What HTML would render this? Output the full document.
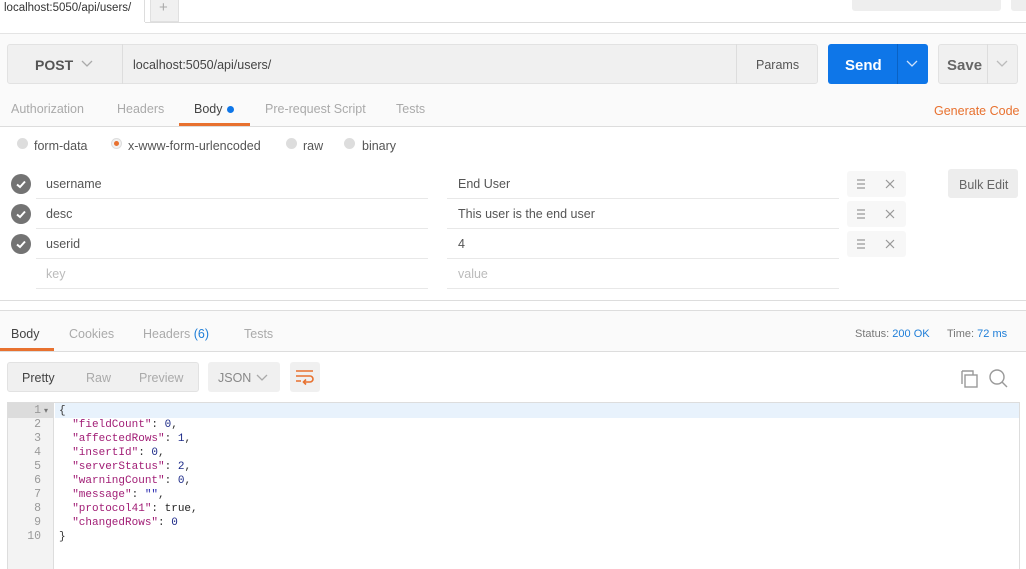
<!DOCTYPE html>
<html><head><meta charset="utf-8"><style>
*{box-sizing:border-box;margin:0;padding:0}
body{width:1026px;height:569px;overflow:hidden;background:#fff;font-family:"Liberation Sans",sans-serif;font-size:12px;color:#505050;position:relative}
.a{position:absolute}
.t{position:absolute;white-space:nowrap;transform:translateY(1px)}
.mono{font-family:"Liberation Mono",monospace;font-size:11px}
</style></head><body>
<!-- top tabs -->
<div class="t" style="left:4px;top:1px;font-size:11.5px;color:#333">localhost:5050/api/users/</div>
<div class="a" style="left:144px;top:0;width:1px;height:22px;background:#ddd"></div>
<div class="a" style="left:150px;top:0;width:29px;height:22px;background:#f0f0f0;border:1px solid #e0e0e0;border-top:0"></div>
<div class="t" style="left:159px;top:-2px;font-size:15px;color:#aaa">+</div>
<div class="a" style="left:145px;top:22px;width:881px;height:1px;background:#ddd"></div>
<div class="a" style="left:852px;top:0;width:149px;height:11px;background:#eee;border-radius:0 0 3px 3px"></div>
<div class="a" style="left:1011px;top:0;width:15px;height:11px;background:#eee;border-radius:0 0 0 3px"></div>
<!-- request region -->
<div class="a" style="left:0;top:33px;width:1026px;height:94px;background:#fafafa;border-top:1px solid #e4e4e4"></div>
<div class="a" style="left:7px;top:44px;width:811px;height:40px;background:#f0f0f0;border:1px solid #e2e2e2;border-radius:3px"></div>
<div class="a" style="left:122px;top:44px;width:1px;height:40px;background:#ddd"></div>
<div class="a" style="left:736px;top:44px;width:1px;height:40px;background:#ddd"></div>
<div class="t" style="left:35px;top:56px;font-size:14px;font-weight:bold;color:#555">POST</div>
<svg class="a" style="left:81px;top:60px" width="12" height="8"><path d="M1 1L6 6L11 1" fill="none" stroke="#aaa" stroke-width="1.3"/></svg>
<div class="t" style="left:133px;top:57px;font-size:12.5px;color:#444">localhost:5050/api/users/</div>
<div class="t" style="left:756px;top:57px;font-size:12.5px;color:#555">Params</div>
<div class="a" style="left:828px;top:44px;width:100px;height:40px;background:#0e76e8;border-radius:3px"></div>
<div class="a" style="left:897px;top:44px;width:1px;height:40px;background:#0a62c4"></div>
<div class="t" style="left:845px;top:56px;font-size:15px;font-weight:bold;color:#fff">Send</div>
<svg class="a" style="left:906px;top:60px" width="12" height="8"><path d="M1 1L6 6L11 1" fill="none" stroke="#cfe2fb" stroke-width="1.3"/></svg>
<div class="a" style="left:938px;top:44px;width:80px;height:40px;background:#f0f0f0;border:1px solid #e2e2e2;border-radius:3px"></div>
<div class="a" style="left:987px;top:44px;width:1px;height:40px;background:#ddd"></div>
<div class="t" style="left:947px;top:56px;font-size:15px;font-weight:bold;color:#666">Save</div>
<svg class="a" style="left:996px;top:60px" width="12" height="8"><path d="M1 1L6 6L11 1" fill="none" stroke="#bbb" stroke-width="1.3"/></svg>
<!-- req tabs -->
<div class="t" style="left:11px;top:101px;font-size:12.5px;color:#aaa">Authorization</div>
<div class="t" style="left:117px;top:101px;font-size:12.5px;color:#aaa">Headers</div>
<div class="t" style="left:194px;top:101px;font-size:12.5px;color:#444">Body</div>
<div class="a" style="left:227px;top:106px;width:7px;height:7px;border-radius:50%;background:#0e76e8"></div>
<div class="t" style="left:265px;top:101px;font-size:12.5px;color:#aaa">Pre-request Script</div>
<div class="t" style="left:396px;top:101px;font-size:12.5px;color:#aaa">Tests</div>
<div class="t" style="left:934px;top:103px;font-size:12.5px;color:#e8712f">Generate Code</div>
<div class="a" style="left:0;top:126px;width:1026px;height:1px;background:#ddd"></div>
<div class="a" style="left:179px;top:123px;width:71px;height:3px;background:#e8712f"></div>
<!-- radios -->
<div class="a" style="left:17px;top:138px;width:11px;height:11px;border-radius:50%;background:#ddd"></div>
<div class="t" style="left:34px;top:138px;font-size:12.5px;color:#555">form-data</div>
<div class="a" style="left:111px;top:138px;width:11px;height:11px;border-radius:50%;background:#f1f1f1;border:1px solid #ddd"></div>
<div class="a" style="left:114px;top:141px;width:5px;height:5px;border-radius:50%;background:#e8712f"></div>
<div class="t" style="left:128px;top:138px;font-size:12.5px;color:#555">x-www-form-urlencoded</div>
<div class="a" style="left:286px;top:138px;width:11px;height:11px;border-radius:50%;background:#ddd"></div>
<div class="t" style="left:303px;top:138px;font-size:12.5px;color:#555">raw</div>
<div class="a" style="left:344px;top:138px;width:11px;height:11px;border-radius:50%;background:#ddd"></div>
<div class="t" style="left:362px;top:138px;font-size:12.5px;color:#555">binary</div>
<!-- rows -->
<div class="a" style="left:11px;top:174px;width:20px;height:20px;border-radius:50%;background:#737373"></div>
<div class="a" style="left:11px;top:204px;width:20px;height:20px;border-radius:50%;background:#737373"></div>
<div class="a" style="left:11px;top:234px;width:20px;height:20px;border-radius:50%;background:#737373"></div>
<svg class="a" style="left:11px;top:174px" width="20" height="80"><g fill="none" stroke="#fff" stroke-width="2"><path d="M6 10.5L9 13L14 7.5"/><path d="M6 40.5L9 43L14 37.5"/><path d="M6 70.5L9 73L14 67.5"/></g></svg>
<div class="t" style="left:46px;top:176px;font-size:12.5px;color:#555">username</div>
<div class="t" style="left:46px;top:206px;font-size:12.5px;color:#555">desc</div>
<div class="t" style="left:46px;top:236px;font-size:12.5px;color:#555">userid</div>
<div class="t" style="left:46px;top:266px;font-size:12.5px;color:#bbb">key</div>
<div class="t" style="left:458px;top:176px;font-size:12.5px;color:#555">End User</div>
<div class="t" style="left:458px;top:206px;font-size:12.5px;color:#555">This user is the end user</div>
<div class="t" style="left:458px;top:236px;font-size:12.5px;color:#555">4</div>
<div class="t" style="left:458px;top:266px;font-size:12.5px;color:#bbb">value</div>
<div class="a" style="left:36px;top:198px;width:392px;height:1px;background:#e8e8e8"></div>
<div class="a" style="left:36px;top:228px;width:392px;height:1px;background:#e8e8e8"></div>
<div class="a" style="left:36px;top:258px;width:392px;height:1px;background:#e8e8e8"></div>
<div class="a" style="left:36px;top:288px;width:392px;height:1px;background:#e8e8e8"></div>
<div class="a" style="left:447px;top:198px;width:392px;height:1px;background:#e8e8e8"></div>
<div class="a" style="left:447px;top:228px;width:392px;height:1px;background:#e8e8e8"></div>
<div class="a" style="left:447px;top:258px;width:392px;height:1px;background:#e8e8e8"></div>
<div class="a" style="left:447px;top:288px;width:392px;height:1px;background:#e8e8e8"></div>
<div class="a" style="left:847px;top:171px;width:59px;height:26px;background:#f7f7f7;border-radius:3px"></div>
<div class="a" style="left:847px;top:201px;width:59px;height:26px;background:#f7f7f7;border-radius:3px"></div>
<div class="a" style="left:847px;top:231px;width:59px;height:26px;background:#f7f7f7;border-radius:3px"></div>
<svg class="a" style="left:847px;top:171px" width="59" height="86"><g fill="none" stroke="#999" stroke-width="1.2"><path d="M10 9h8M10 13h8M10 17h8M10 39h8M10 43h8M10 47h8M10 69h8M10 73h8M10 77h8"/><path d="M39 9l8 8M47 9l-8 8M39 39l8 8M47 39l-8 8M39 69l8 8M47 69l-8 8"/></g></svg>
<div class="a" style="left:948px;top:169px;width:70px;height:29px;background:#ededed;border-radius:3px"></div>
<div class="t" style="left:959px;top:177px;font-size:12.5px;color:#666">Bulk Edit</div>
<!-- response -->
<div class="a" style="left:0;top:300px;width:1026px;height:1px;background:#ddd"></div>
<div class="a" style="left:0;top:310px;width:1026px;height:42px;background:#fafafa;border-top:1px solid #ddd;border-bottom:1px solid #ddd"></div>
<div class="a" style="left:0;top:348px;width:54px;height:3px;background:#e8712f"></div>
<div class="t" style="left:11px;top:326px;font-size:12.5px;color:#444">Body</div>
<div class="t" style="left:69px;top:326px;font-size:12.5px;color:#aaa">Cookies</div>
<div class="t" style="left:143px;top:326px;font-size:12.5px;color:#aaa">Headers <span style="color:#1f7ed8">(6)</span></div>
<div class="t" style="left:244px;top:326px;font-size:12.5px;color:#aaa">Tests</div>
<div class="t" style="left:855px;top:327px;font-size:11px;color:#777">Status: <span style="color:#1f7ed8">200 OK</span></div>
<div class="t" style="left:947px;top:327px;font-size:11px;color:#777">Time: <span style="color:#1f7ed8">72 ms</span></div>
<div class="a" style="left:7px;top:362px;width:192px;height:30px;background:#f0f0f0;border:1px solid #e2e2e2;border-radius:3px"></div>
<div class="t" style="left:22px;top:370px;font-size:12.5px;color:#444">Pretty</div>
<div class="t" style="left:86px;top:370px;font-size:12.5px;color:#aaa">Raw</div>
<div class="t" style="left:139px;top:370px;font-size:12.5px;color:#aaa">Preview</div>
<div class="a" style="left:208px;top:362px;width:72px;height:30px;background:#f0f0f0;border-radius:3px"></div>
<div class="t" style="left:218px;top:370px;font-size:12.5px;color:#888">JSON</div>
<svg class="a" style="left:256px;top:374px" width="12" height="8"><path d="M1 1L6 6L11 1" fill="none" stroke="#aaa" stroke-width="1.3"/></svg>
<div class="a" style="left:290px;top:362px;width:30px;height:30px;background:#f0f0f0;border-radius:3px"></div>
<svg class="a" style="left:294px;top:368px" width="22" height="18"><g fill="none" stroke="#e8712f" stroke-width="1.6"><path d="M2 3h17M2 8h14a3 3 0 0 1 0 6h-6M2 13h5"/><path d="M12 11.5l-2.5 2.5l2.5 2.5"/></g></svg>
<svg class="a" style="left:960px;top:368px" width="50" height="20"><g fill="none" stroke="#999" stroke-width="1.4"><path d="M2 3h11v4"/><path d="M2 3v13"/><rect x="5" y="7" width="12" height="12" fill="#fff"/><circle cx="37" cy="9" r="7"/><path d="M42 14l5 5"/></g></svg>
<!-- code -->
<div class="a" style="left:7px;top:402px;width:1013px;height:167px;border:1px solid #ddd;border-bottom:0"></div>
<div class="a" style="left:8px;top:403px;width:46px;height:166px;background:#f3f3f3;border-right:1px solid #ddd"></div>
<div class="a" style="left:8px;top:403px;width:46px;height:15px;background:#dcdcdc"></div>
<div class="a" style="left:55px;top:403px;width:964px;height:15px;background:#e8f2fc"></div>
<div class="a mono" style="left:8px;top:404px;width:33px;text-align:right;line-height:14px;color:#999;font-size:11.5px">1<br>2<br>3<br>4<br>5<br>6<br>7<br>8<br>9<br>10</div>
<div class="t" style="left:44px;top:403px;font-size:8px;color:#777;line-height:14px">▾</div>
<pre class="a mono" style="left:59px;top:404px;line-height:14px;color:#333">{
  <span style="color:#a11d75">"fieldCount"</span>: <span style="color:#1c2a88">0</span>,
  <span style="color:#a11d75">"affectedRows"</span>: <span style="color:#1c2a88">1</span>,
  <span style="color:#a11d75">"insertId"</span>: <span style="color:#1c2a88">0</span>,
  <span style="color:#a11d75">"serverStatus"</span>: <span style="color:#1c2a88">2</span>,
  <span style="color:#a11d75">"warningCount"</span>: <span style="color:#1c2a88">0</span>,
  <span style="color:#a11d75">"message"</span>: <span style="color:#2a2ab0">""</span>,
  <span style="color:#a11d75">"protocol41"</span>: <span style="color:#222">true</span>,
  <span style="color:#a11d75">"changedRows"</span>: <span style="color:#1c2a88">0</span>
}</pre>
</body></html>
